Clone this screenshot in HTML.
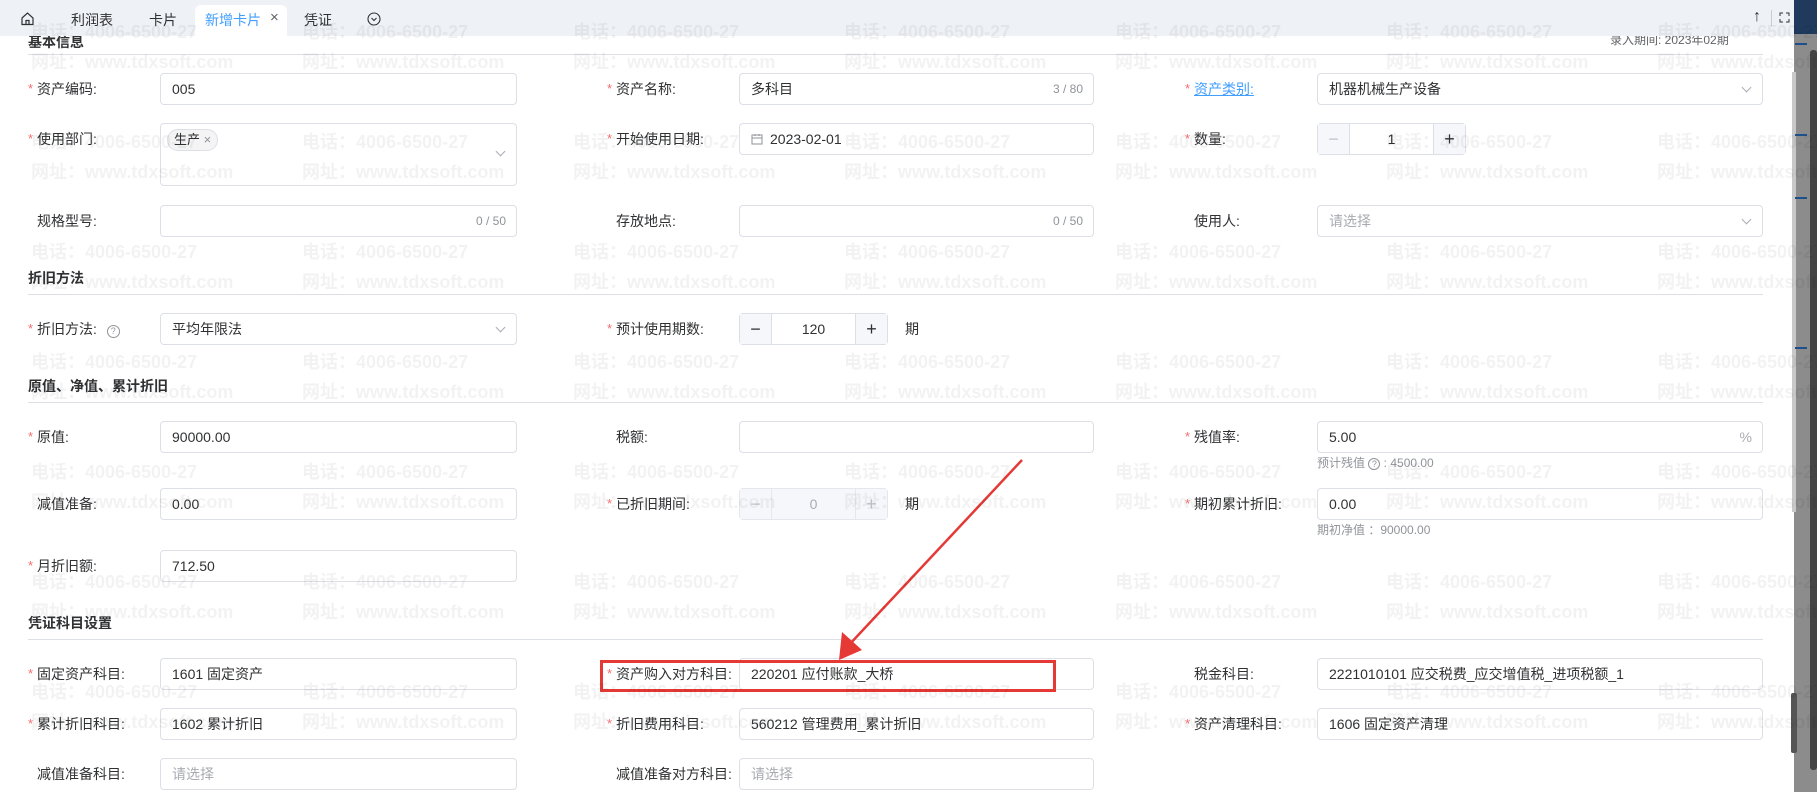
<!DOCTYPE html>
<html><head><meta charset="utf-8">
<style>
*{box-sizing:border-box;margin:0;padding:0}
body{width:1817px;height:792px;overflow:hidden;background:#fff;position:relative;font-family:"Liberation Sans","Noto Sans CJK SC",sans-serif;font-size:14px;color:#303133}
.a{position:absolute}
.lb{position:absolute;height:32px;line-height:32px;white-space:nowrap;color:#303133}
.st{color:#f56c6c;position:absolute;margin-left:-9px;font-size:13px}
.in{position:absolute;height:32px;border:1px solid #dcdfe6;border-radius:4px;background:#fff;line-height:30px;padding-left:11px;white-space:nowrap}
.ph{color:#a8abb2}
.cnt{position:absolute;right:10px;top:0;color:#909399;font-size:12px}
.chev{position:absolute;right:12px;top:10px;width:7px;height:7px;border-right:1px solid #a8abb2;border-bottom:1px solid #a8abb2;transform:rotate(45deg)}
.sec{position:absolute;left:28px;font-weight:bold;font-size:14px}
.line{position:absolute;left:28px;width:1735px;height:1px;background:#dcdfe6}
.help{position:absolute;font-size:12px;color:#909399}
.wm{position:absolute;font-weight:bold;font-size:18px;line-height:30px;color:rgba(0,0,0,0.05);white-space:nowrap;font-family:"Liberation Sans","Noto Sans CJK SC",sans-serif;pointer-events:none;z-index:50}
.btn{position:absolute;top:0;width:32px;height:30px;background:#f5f7fa;text-align:center;line-height:30px;font-size:18px;color:#303133}
</style></head><body>

<div class="a" style="left:0;top:0;width:1794px;height:36px;background:#eef1f5;z-index:10"></div>
<div class="a" style="left:195px;top:5px;width:92px;height:31px;background:#fff;border-radius:6px 6px 0 0;z-index:11"></div>
<svg class="a" style="left:20px;top:11px;z-index:12" width="15" height="15" viewBox="0 0 15 15"><path d="M2 7 L7.5 2 L13 7 V13.5 H2 Z M6 13.5 V9.5 H9 V13.5" fill="none" stroke="#303133" stroke-width="1.2"/></svg>
<div class="a" style="left:71px;top:10px;z-index:12">利润表</div>
<div class="a" style="left:149px;top:10px;z-index:12">卡片</div>
<div class="a" style="left:205px;top:10px;z-index:12;color:#409eff">新增卡片</div>
<div class="a" style="left:270px;top:9px;z-index:12;color:#606266;font-size:15px">×</div>
<div class="a" style="left:304px;top:10px;z-index:12">凭证</div>
<svg class="a" style="left:367px;top:12px;z-index:12" width="14" height="14" viewBox="0 0 14 14"><circle cx="7" cy="7" r="6" fill="none" stroke="#303133" stroke-width="1.1"/><path d="M4.5 6 L7 8.5 L9.5 6" fill="none" stroke="#303133" stroke-width="1.1"/></svg>
<div class="a" style="left:1753px;top:8px;z-index:12;font-size:16px">↑</div>
<div class="a" style="left:1771px;top:10px;width:1px;height:16px;background:#ccc;z-index:12"></div>
<svg class="a" style="left:1779px;top:12px;z-index:12" width="11" height="11" viewBox="0 0 11 11"><path d="M1 4V1H4M7 1H10V4M10 7V10H7M4 10H1V7" fill="none" stroke="#303133" stroke-width="1"/></svg>

<div class="a" style="left:1794px;top:0;width:23px;height:792px;background:#8c8c8c;z-index:20"></div>
<div class="a" style="left:1794px;top:0;width:23px;height:34px;background:#1f3a5c;z-index:21"></div>
<div class="a" style="left:1810px;top:50px;width:7px;height:720px;background:#444;border-radius:3px;z-index:21"></div>
<div class="a" style="left:1792px;top:72px;width:4px;height:440px;background:#c8c8c8;z-index:21"></div>
<div class="a" style="left:1795px;top:43px;width:12px;height:2px;background:#1d4f8a;z-index:22"></div>
<div class="a" style="left:1795px;top:134px;width:12px;height:2px;background:#1d4f8a;z-index:22"></div>
<div class="a" style="left:1795px;top:197px;width:12px;height:2px;background:#1d4f8a;z-index:22"></div>
<div class="a" style="left:1795px;top:347px;width:12px;height:2px;background:#1d4f8a;z-index:22"></div>
<div class="a" style="left:1791px;top:693px;width:6px;height:60px;background:#555;border-radius:2px;z-index:22"></div>

<div class="sec" style="top:32px">基本信息</div>
<div class="a" style="left:1610px;top:31px;font-size:12px;color:#606266">录入期间: 2023年02期</div>
<div class="line" style="top:54px"></div>

<div class="lb" style="left:37px;top:73px"><span class="st">*</span>资产编码:</div>
<div class="in" style="left:160px;top:73px;width:357px">005</div>
<div class="lb" style="left:616px;top:73px"><span class="st">*</span>资产名称:</div>
<div class="in" style="left:739px;top:73px;width:355px">多科目<span class="cnt">3 / 80</span></div>
<div class="lb" style="left:1194px;top:73px;color:#409eff;text-decoration:underline"><span class="st">*</span>资产类别:</div>
<div class="in" style="left:1317px;top:73px;width:446px">机器机械生产设备<span class="chev"></span></div>

<div class="lb" style="left:37px;top:123px"><span class="st">*</span>使用部门:</div>
<div class="in" style="left:160px;top:123px;width:357px;height:63px;padding-left:6px"><span style="display:inline-block;margin-top:5px;height:22px;line-height:20px;border:1px solid #dcdfe6;border-radius:11px;background:#f4f4f5;padding:0 6px;font-size:13px;vertical-align:top">生产 <span style="color:#909399">×</span></span><span class="chev" style="top:24px"></span></div>
<div class="lb" style="left:616px;top:123px"><span class="st">*</span>开始使用日期:</div>
<div class="in" style="left:739px;top:123px;width:355px;padding-left:30px"><svg class="a" style="left:11px;top:9px" width="12" height="12" viewBox="0 0 12 12"><rect x="1" y="2" width="10" height="9" fill="none" stroke="#909399"/><path d="M1 5H11M4 1V3M8 1V3" stroke="#909399"/></svg>2023-02-01</div>
<div class="lb" style="left:1194px;top:123px"><span class="st">*</span>数量:</div>
<div class="in" style="left:1317px;top:123px;width:149px;padding:0;text-align:center"><span class="btn" style="left:0;border-right:1px solid #dcdfe6;color:#c0c4cc">−</span>1<span class="btn" style="right:0;border-left:1px solid #dcdfe6">+</span></div>

<div class="lb" style="left:37px;top:205px">规格型号:</div>
<div class="in" style="left:160px;top:205px;width:357px"><span class="cnt">0 / 50</span></div>
<div class="lb" style="left:616px;top:205px">存放地点:</div>
<div class="in" style="left:739px;top:205px;width:355px"><span class="cnt">0 / 50</span></div>
<div class="lb" style="left:1194px;top:205px">使用人:</div>
<div class="in ph" style="left:1317px;top:205px;width:446px">请选择<span class="chev"></span></div>

<div class="sec" style="top:268px">折旧方法</div>
<div class="line" style="top:294px"></div>

<div class="lb" style="left:37px;top:313px"><span class="st">*</span>折旧方法: <span style="display:inline-block;width:13px;height:13px;border:1px solid #909399;border-radius:50%;font-size:9px;line-height:11px;text-align:center;color:#909399;margin-left:6px">?</span></div>
<div class="in" style="left:160px;top:313px;width:357px">平均年限法<span class="chev"></span></div>
<div class="lb" style="left:616px;top:313px"><span class="st">*</span>预计使用期数:</div>
<div class="in" style="left:739px;top:313px;width:149px;padding:0;text-align:center"><span class="btn" style="left:0;border-right:1px solid #dcdfe6">−</span>120<span class="btn" style="right:0;border-left:1px solid #dcdfe6">+</span></div>
<div class="lb" style="left:905px;top:313px">期</div>

<div class="sec" style="top:376px">原值、净值、累计折旧</div>
<div class="line" style="top:402px"></div>

<div class="lb" style="left:37px;top:421px"><span class="st">*</span>原值:</div>
<div class="in" style="left:160px;top:421px;width:357px">90000.00</div>
<div class="lb" style="left:616px;top:421px">税额:</div>
<div class="in" style="left:739px;top:421px;width:355px"></div>
<div class="lb" style="left:1194px;top:421px"><span class="st">*</span>残值率:</div>
<div class="in" style="left:1317px;top:421px;width:446px">5.00<span class="cnt" style="font-size:14px;color:#a8abb2">%</span></div>
<div class="help" style="left:1317px;top:454px">预计残值 <span style="display:inline-block;width:12px;height:12px;border:1px solid #909399;border-radius:50%;font-size:9px;line-height:10px;text-align:center">?</span> : 4500.00</div>

<div class="lb" style="left:37px;top:488px">减值准备:</div>
<div class="in" style="left:160px;top:488px;width:357px">0.00</div>
<div class="lb" style="left:616px;top:488px"><span class="st">*</span>已折旧期间:</div>
<div class="in" style="left:739px;top:488px;width:149px;padding:0;text-align:center;background:#f5f7fa;color:#a8abb2;border-color:#e4e7ed"><span class="btn" style="left:0;border-right:1px solid #e4e7ed;color:#c0c4cc">−</span>0<span class="btn" style="right:0;border-left:1px solid #e4e7ed;color:#c0c4cc">+</span></div>
<div class="lb" style="left:905px;top:488px">期</div>
<div class="lb" style="left:1194px;top:488px"><span class="st">*</span>期初累计折旧:</div>
<div class="in" style="left:1317px;top:488px;width:446px">0.00</div>
<div class="help" style="left:1317px;top:521px">期初净值 ：90000.00</div>

<div class="lb" style="left:37px;top:550px"><span class="st">*</span>月折旧额:</div>
<div class="in" style="left:160px;top:550px;width:357px">712.50</div>

<div class="sec" style="top:613px">凭证科目设置</div>
<div class="line" style="top:639px"></div>

<div class="lb" style="left:37px;top:658px"><span class="st">*</span>固定资产科目:</div>
<div class="in" style="left:160px;top:658px;width:357px">1601 固定资产</div>
<div class="lb" style="left:616px;top:658px"><span class="st">*</span>资产购入对方科目:</div>
<div class="in" style="left:739px;top:658px;width:355px">220201 应付账款_大桥</div>
<div class="lb" style="left:1194px;top:658px">税金科目:</div>
<div class="in" style="left:1317px;top:658px;width:446px">2221010101 应交税费_应交增值税_进项税额_1</div>

<div class="lb" style="left:37px;top:708px"><span class="st">*</span>累计折旧科目:</div>
<div class="in" style="left:160px;top:708px;width:357px">1602 累计折旧</div>
<div class="lb" style="left:616px;top:708px"><span class="st">*</span>折旧费用科目:</div>
<div class="in" style="left:739px;top:708px;width:355px">560212 管理费用_累计折旧</div>
<div class="lb" style="left:1194px;top:708px"><span class="st">*</span>资产清理科目:</div>
<div class="in" style="left:1317px;top:708px;width:446px">1606 固定资产清理</div>

<div class="lb" style="left:37px;top:758px">减值准备科目:</div>
<div class="in ph" style="left:160px;top:758px;width:357px">请选择</div>
<div class="lb" style="left:616px;top:758px">减值准备对方科目:</div>
<div class="in ph" style="left:739px;top:758px;width:355px">请选择</div>

<div class="a" style="left:600px;top:660px;width:456px;height:32px;border:3px solid #e53935;z-index:40"></div>
<svg class="a" style="left:0;top:0;z-index:41" width="1817" height="792"><line x1="1022" y1="460" x2="848" y2="646" stroke="#e53935" stroke-width="2.5"/><polygon points="839,660 842,632 862,650" fill="#e53935"/></svg>

<div class="wm" style="left:31px;top:17px">电话：4006-6500-27<br>网址：www.tdxsoft.com</div>
<div class="wm" style="left:302px;top:17px">电话：4006-6500-27<br>网址：www.tdxsoft.com</div>
<div class="wm" style="left:573px;top:17px">电话：4006-6500-27<br>网址：www.tdxsoft.com</div>
<div class="wm" style="left:844px;top:17px">电话：4006-6500-27<br>网址：www.tdxsoft.com</div>
<div class="wm" style="left:1115px;top:17px">电话：4006-6500-27<br>网址：www.tdxsoft.com</div>
<div class="wm" style="left:1386px;top:17px">电话：4006-6500-27<br>网址：www.tdxsoft.com</div>
<div class="wm" style="left:1657px;top:17px">电话：4006-6500-27<br>网址：www.tdxsoft.com</div>
<div class="wm" style="left:31px;top:127px">电话：4006-6500-27<br>网址：www.tdxsoft.com</div>
<div class="wm" style="left:302px;top:127px">电话：4006-6500-27<br>网址：www.tdxsoft.com</div>
<div class="wm" style="left:573px;top:127px">电话：4006-6500-27<br>网址：www.tdxsoft.com</div>
<div class="wm" style="left:844px;top:127px">电话：4006-6500-27<br>网址：www.tdxsoft.com</div>
<div class="wm" style="left:1115px;top:127px">电话：4006-6500-27<br>网址：www.tdxsoft.com</div>
<div class="wm" style="left:1386px;top:127px">电话：4006-6500-27<br>网址：www.tdxsoft.com</div>
<div class="wm" style="left:1657px;top:127px">电话：4006-6500-27<br>网址：www.tdxsoft.com</div>
<div class="wm" style="left:31px;top:237px">电话：4006-6500-27<br>网址：www.tdxsoft.com</div>
<div class="wm" style="left:302px;top:237px">电话：4006-6500-27<br>网址：www.tdxsoft.com</div>
<div class="wm" style="left:573px;top:237px">电话：4006-6500-27<br>网址：www.tdxsoft.com</div>
<div class="wm" style="left:844px;top:237px">电话：4006-6500-27<br>网址：www.tdxsoft.com</div>
<div class="wm" style="left:1115px;top:237px">电话：4006-6500-27<br>网址：www.tdxsoft.com</div>
<div class="wm" style="left:1386px;top:237px">电话：4006-6500-27<br>网址：www.tdxsoft.com</div>
<div class="wm" style="left:1657px;top:237px">电话：4006-6500-27<br>网址：www.tdxsoft.com</div>
<div class="wm" style="left:31px;top:347px">电话：4006-6500-27<br>网址：www.tdxsoft.com</div>
<div class="wm" style="left:302px;top:347px">电话：4006-6500-27<br>网址：www.tdxsoft.com</div>
<div class="wm" style="left:573px;top:347px">电话：4006-6500-27<br>网址：www.tdxsoft.com</div>
<div class="wm" style="left:844px;top:347px">电话：4006-6500-27<br>网址：www.tdxsoft.com</div>
<div class="wm" style="left:1115px;top:347px">电话：4006-6500-27<br>网址：www.tdxsoft.com</div>
<div class="wm" style="left:1386px;top:347px">电话：4006-6500-27<br>网址：www.tdxsoft.com</div>
<div class="wm" style="left:1657px;top:347px">电话：4006-6500-27<br>网址：www.tdxsoft.com</div>
<div class="wm" style="left:31px;top:457px">电话：4006-6500-27<br>网址：www.tdxsoft.com</div>
<div class="wm" style="left:302px;top:457px">电话：4006-6500-27<br>网址：www.tdxsoft.com</div>
<div class="wm" style="left:573px;top:457px">电话：4006-6500-27<br>网址：www.tdxsoft.com</div>
<div class="wm" style="left:844px;top:457px">电话：4006-6500-27<br>网址：www.tdxsoft.com</div>
<div class="wm" style="left:1115px;top:457px">电话：4006-6500-27<br>网址：www.tdxsoft.com</div>
<div class="wm" style="left:1386px;top:457px">电话：4006-6500-27<br>网址：www.tdxsoft.com</div>
<div class="wm" style="left:1657px;top:457px">电话：4006-6500-27<br>网址：www.tdxsoft.com</div>
<div class="wm" style="left:31px;top:567px">电话：4006-6500-27<br>网址：www.tdxsoft.com</div>
<div class="wm" style="left:302px;top:567px">电话：4006-6500-27<br>网址：www.tdxsoft.com</div>
<div class="wm" style="left:573px;top:567px">电话：4006-6500-27<br>网址：www.tdxsoft.com</div>
<div class="wm" style="left:844px;top:567px">电话：4006-6500-27<br>网址：www.tdxsoft.com</div>
<div class="wm" style="left:1115px;top:567px">电话：4006-6500-27<br>网址：www.tdxsoft.com</div>
<div class="wm" style="left:1386px;top:567px">电话：4006-6500-27<br>网址：www.tdxsoft.com</div>
<div class="wm" style="left:1657px;top:567px">电话：4006-6500-27<br>网址：www.tdxsoft.com</div>
<div class="wm" style="left:31px;top:677px">电话：4006-6500-27<br>网址：www.tdxsoft.com</div>
<div class="wm" style="left:302px;top:677px">电话：4006-6500-27<br>网址：www.tdxsoft.com</div>
<div class="wm" style="left:573px;top:677px">电话：4006-6500-27<br>网址：www.tdxsoft.com</div>
<div class="wm" style="left:844px;top:677px">电话：4006-6500-27<br>网址：www.tdxsoft.com</div>
<div class="wm" style="left:1115px;top:677px">电话：4006-6500-27<br>网址：www.tdxsoft.com</div>
<div class="wm" style="left:1386px;top:677px">电话：4006-6500-27<br>网址：www.tdxsoft.com</div>
<div class="wm" style="left:1657px;top:677px">电话：4006-6500-27<br>网址：www.tdxsoft.com</div>
</body></html>
